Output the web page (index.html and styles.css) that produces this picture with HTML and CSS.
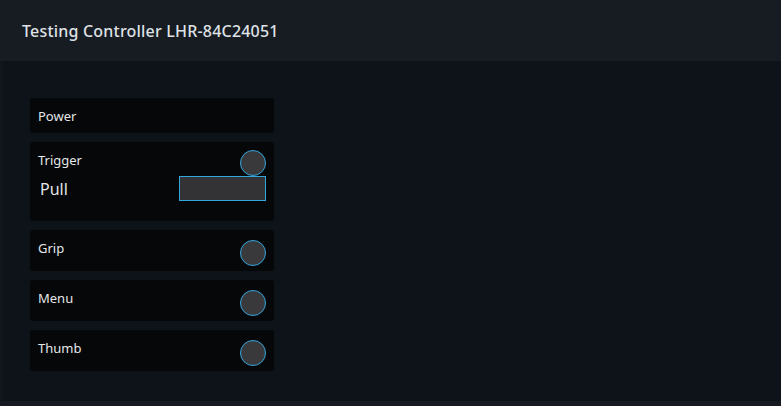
FILE: index.html
```html
<!DOCTYPE html>
<html>
<head>
<meta charset="utf-8">
<link rel="stylesheet" href="styles.css">
</head>
<body>
<div class="app">
  <header class="header">Testing Controller LHR-84C24051</header>
  <main class="content">
    <div class="list">
      <div class="card"><span class="label">Power</span></div>
      <div class="card trigger">
        <div class="row">
          <span class="label">Trigger</span>
          <span class="circle flush"></span>
        </div>
        <div class="row input-row">
          <span class="pull">Pull</span>
          <span class="box"></span>
        </div>
      </div>
      <div class="card">
        <div class="row">
          <span class="label">Grip</span>
          <span class="circle"></span>
        </div>
      </div>
      <div class="card">
        <div class="row">
          <span class="label">Menu</span>
          <span class="circle"></span>
        </div>
      </div>
      <div class="card">
        <div class="row">
          <span class="label">Thumb</span>
          <span class="circle"></span>
        </div>
      </div>
    </div>
  </main>
  <div class="footer"></div>
</div>
</body>
</html>
```
FILE: styles.css
```css
html, body {
  margin: 0;
  padding: 0;
  background: #0e131a;
}
body {
  font-family: "Noto Sans", "Open Sans", sans-serif;
  color: #e4e6e8;
}
.app {
  width: 781px;
  height: 406px;
  display: flex;
  flex-direction: column;
  overflow: hidden;
}
.header {
  height: 61px;
  box-sizing: border-box;
  background: #171b22;
  padding-left: 22px;
  display: flex;
  align-items: center;
  font-size: 16px;
  font-weight: 500;
  letter-spacing: 0.2px;
  color: #dfe2e6;
}
.content {
  flex: 1;
  padding: 37px 0 0 30px;
  border-left: 2px solid #11161d;
}
.list {
  width: 244px;
  display: flex;
  flex-direction: column;
  gap: 9px;
  margin-left: -2px;
}
.card {
  background: #050709;
  border-radius: 3px;
  padding: 8px 8px 7px 8px;
}
.label {
  display: block;
  font-size: 13px;
  line-height: 20px;
}
.row {
  display: flex;
  justify-content: space-between;
  align-items: flex-start;
}
.circle {
  box-sizing: border-box;
  flex: none;
  width: 26px;
  height: 26px;
  border-radius: 50%;
  background: #39393b;
  border: 1.5px solid #34a6de;
  margin-top: 2px;
  margin-bottom: -2px;
}
.circle.flush {
  margin-top: 0;
  margin-bottom: 0;
}
.trigger {
  padding-bottom: 20px;
}
.input-row {
  align-items: center;
}
.pull {
  font-size: 16px;
  padding-left: 2px;
}
.box {
  box-sizing: border-box;
  width: 87px;
  height: 25px;
  background: #333336;
  border: 1px solid #34a6de;
}
.footer {
  height: 5px;
  background: #151a21;
}
```
